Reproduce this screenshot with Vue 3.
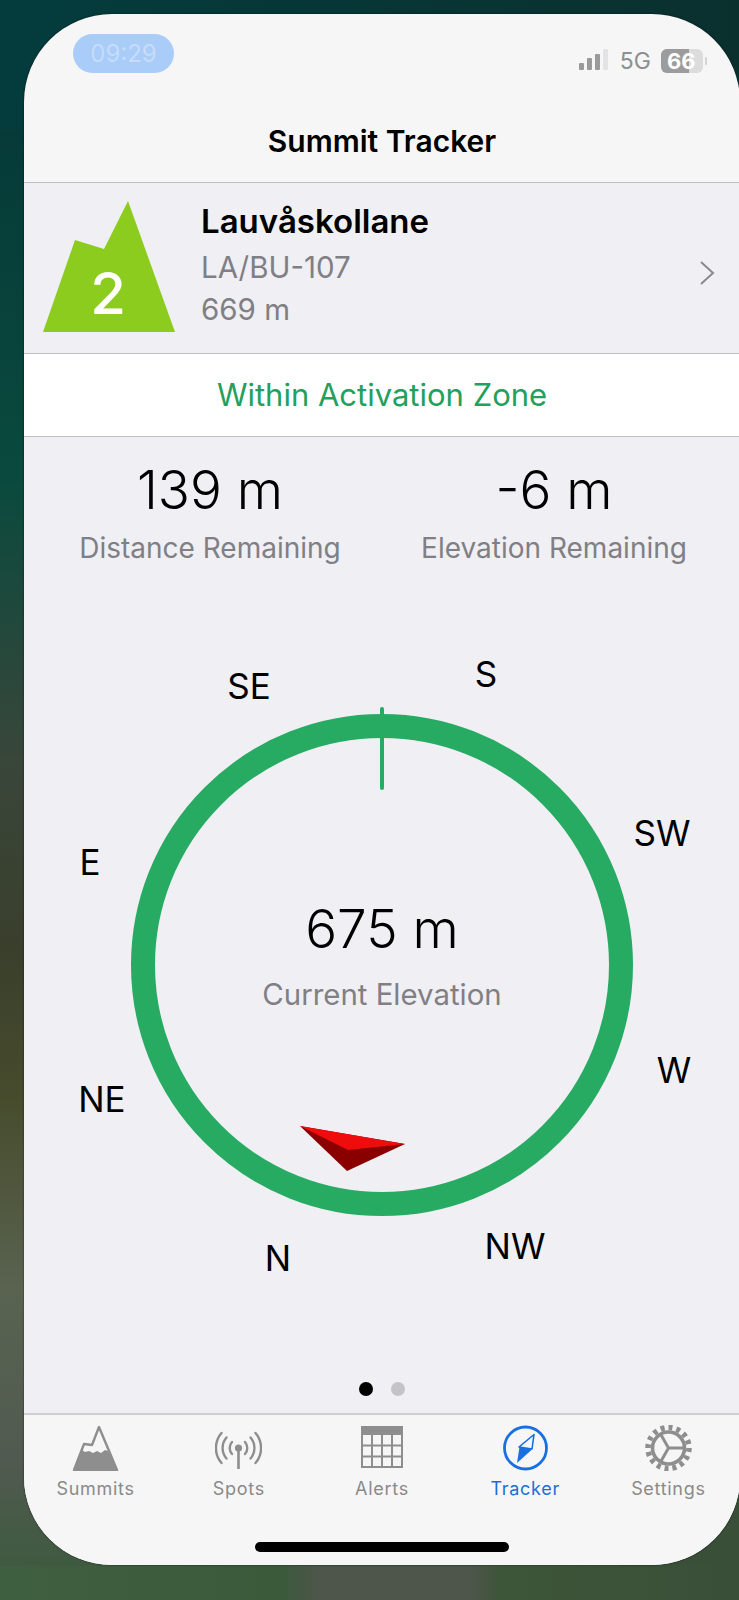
<script setup>
const RADIUS = 310

const headings = [
  { label: 'S', angle: 19.6 },
  { label: 'SW', angle: 64.6 },
  { label: 'W', angle: 109.6 },
  { label: 'NW', angle: 154.6 },
  { label: 'N', angle: 199.6 },
  { label: 'NE', angle: 244.6 },
  { label: 'E', angle: 289.6 },
  { label: 'SE', angle: 334.6 }
]

// position of a heading on the compass ring
const headingStyle = (angle) => {
  const rad = (angle * Math.PI) / 180
  return {
    left: 358 + RADIUS * Math.sin(rad) + 'px',
    top: 321 - RADIUS * Math.cos(rad) + 'px'
  }
}

const tabs = ['Summits', 'Spots', 'Alerts', 'Tracker', 'Settings']
</script>

<template>
  <div class="wallpaper">
    <div class="phone">
      <header class="top">
        <div class="status">
          <span class="clock">09:29</span>
          <div class="status-right">
            <svg class="signal" width="30" height="24" viewBox="0 0 30 24">
              <rect x="0" y="14" width="5" height="7" rx="1" fill="#9a9a9a" />
              <rect x="8" y="9" width="5" height="12" rx="1" fill="#9a9a9a" />
              <rect x="16" y="5" width="5" height="16" rx="1" fill="#9a9a9a" />
              <rect x="24" y="0" width="5" height="21" rx="1" fill="#e3e3e5" />
            </svg>
            <span class="net">5G</span>
            <div class="battery">
              <div class="battery-fill"></div>
              <span class="battery-text">66</span>
            </div>
            <span class="battery-cap"></span>
          </div>
        </div>
        <h1 class="title">Summit Tracker</h1>
      </header>

      <section class="summit">
        <svg class="peak" width="132" height="131" viewBox="0 0 132 131">
          <path d="M85 0 L132 131 L0 131 L32 39 L61 48 Z" fill="#8ccc1f" />
          <text x="65" y="113" text-anchor="middle" class="peak-num">2</text>
        </svg>
        <div class="summit-info">
          <div class="summit-name">Lauvåskollane</div>
          <div class="summit-sub">LA/BU-107</div>
          <div class="summit-sub">669 m</div>
        </div>
        <svg class="chevron" width="16" height="26" viewBox="0 0 16 26">
          <path d="M2 2 L14 13 L2 24" fill="none" stroke="#8a8a8e" stroke-width="2" />
        </svg>
      </section>

      <div class="zone">Within Activation Zone</div>

      <main class="content">
        <div class="stats">
          <div class="stat">
            <div class="stat-value">139 m</div>
            <div class="stat-label">Distance Remaining</div>
          </div>
          <div class="stat">
            <div class="stat-value">-6 m</div>
            <div class="stat-label">Elevation Remaining</div>
          </div>
        </div>

        <div class="compass">
          <svg class="ring" width="716" height="640" viewBox="0 0 716 640">
            <circle cx="358" cy="320" r="239" fill="none" stroke="#27ab62" stroke-width="24" />
            <line x1="358" y1="64" x2="358" y2="143" stroke="#27ab62" stroke-width="4" stroke-linecap="round" />
            <polygon points="276,481 381,499 323,526" fill="#8a0000" />
            <polygon points="276,481 381,499 324,505" fill="#ee0c0c" />
          </svg>
          <span
            v-for="h in headings"
            :key="h.label"
            class="heading"
            :style="headingStyle(h.angle)"
          >{{ h.label }}</span>
          <div class="elevation">
            <div class="stat-value">675 m</div>
            <div class="stat-label elevation-label">Current Elevation</div>
          </div>
        </div>

        <div class="dots">
          <span class="dot active"></span>
          <span class="dot"></span>
        </div>
      </main>

      <footer class="tabbar">
        <div class="tabs">
          <div v-for="tab in tabs" :key="tab" class="tab" :class="{ current: tab === 'Tracker' }">
            <svg v-if="tab === 'Summits'" width="47" height="46" viewBox="0 0 47 46">
              <path d="M2 45 L12 19 L20 20 L27 2 L45 45 Z" fill="none" stroke="#8e8e8e" stroke-width="2.4" stroke-linejoin="round" />
              <path d="M2 45 L10 25 L13 27 L17 26 L21 28 L25 26 L29 28 L33 25 L36 26 L45 45 Z" fill="#8e8e8e" />
            </svg>
            <svg v-else-if="tab === 'Spots'" width="47" height="46" viewBox="0 0 47 46">
              <g fill="none" stroke="#8e8e8e" stroke-width="2.4" stroke-linecap="round">
                <path d="M17 17 A9 9 0 0 0 17 29" />
                <path d="M30 17 A9 9 0 0 1 30 29" />
                <path d="M11.5 12.5 A16 16 0 0 0 11.5 33.5" />
                <path d="M35.5 12.5 A16 16 0 0 1 35.5 33.5" />
                <path d="M6.5 8 A23 23 0 0 0 6.5 38" />
                <path d="M40.5 8 A23 23 0 0 1 40.5 38" />
              </g>
              <circle cx="23.5" cy="23" r="3.6" fill="#8e8e8e" />
              <line x1="23.5" y1="23" x2="23.5" y2="44" stroke="#8e8e8e" stroke-width="2.6" />
            </svg>
            <svg v-else-if="tab === 'Alerts'" width="42" height="46" viewBox="0 0 42 46">
              <rect x="0" y="1" width="42" height="9" fill="#8e8e8e" />
              <path d="M1 1 V42 H41 V1 M1 20.5 H41 M1 31.5 H41 M11 10 V42 M21 10 V42 M31 10 V42" fill="none" stroke="#8e8e8e" stroke-width="2" />
            </svg>
            <svg v-else-if="tab === 'Tracker'" width="47" height="46" viewBox="0 0 47 46">
              <circle cx="23.5" cy="23" r="21" fill="none" stroke="#1a6fe0" stroke-width="2.8" />
              <polygon points="32,9.5 17,22 30,24" fill="none" stroke="#1a6fe0" stroke-width="1.6" stroke-linejoin="round" />
              <polygon points="15,38 17.5,22 30,24.5" fill="#1a6fe0" />
            </svg>
            <svg v-else width="47" height="46" viewBox="0 0 47 46">
              <circle cx="23.5" cy="23" r="20.5" fill="none" stroke="#8e8e8e" stroke-width="5.5" pathLength="32" stroke-dasharray="1 1" />
              <circle cx="23.5" cy="23" r="16" fill="none" stroke="#8e8e8e" stroke-width="3.6" />
              <path d="M23.5 23 H39 M23.5 23 L15.8 36.4 M23.5 23 L15.8 9.6" fill="none" stroke="#8e8e8e" stroke-width="3" />
            </svg>
            <span class="tab-label">{{ tab }}</span>
          </div>
        </div>
        <div class="home-bar"></div>
      </footer>
    </div>
  </div>
</template>

<style scoped>
.wallpaper {
  width: 739px;
  height: 1600px;
  overflow: hidden;
  padding: 14px 0 0 24px;
  box-sizing: border-box;
  font-family: Inter, "Liberation Sans", sans-serif;
  background:
    linear-gradient(to right, #3f6040 0, #3a5a3a 280px, #4e554b 320px, #4e554b 470px, #3d5539 500px, #3a4f38 739px) 0 1566px / 100% 34px no-repeat,
    linear-gradient(#3a4f38, #3a4f38) 620px 1470px / 119px 96px no-repeat,
    linear-gradient(to right, #043c3d 0, #0a302e 739px) 0 0 / 100% 130px no-repeat,
    linear-gradient(to bottom, #053a38 130px, #0a4a3e 480px, #39463a 760px, #3a3f2c 950px, #474c2d 1100px, #596350 1290px, #515a50 1460px, #3f5a40 1566px);
}

.phone {
  width: 716px;
  height: 1551px;
  display: flex;
  flex-direction: column;
  border-radius: 88px;
  overflow: hidden;
  background: #f6f6f7;
  box-shadow: 0 0 2px rgba(0, 0, 0, 0.7);
}

.top {
  height: 169px;
  flex: none;
  box-sizing: border-box;
  border-bottom: 1px solid #bdbdc3;
  padding: 20px 0 0;
}

.status {
  display: flex;
  justify-content: space-between;
  align-items: flex-start;
  padding: 0 33px 0 49px;
}

.clock {
  width: 101px;
  height: 39px;
  border-radius: 20px;
  background: #a9cdf8;
  color: #c6dcf8;
  font-size: 24px;
  line-height: 39px;
  text-align: center;
}

.status-right {
  display: flex;
  align-items: center;
  margin-top: 13px;
}

.signal {
  margin-right: 11px;
}

.net {
  font-size: 23px;
  color: #8f8f8f;
  margin-right: 10px;
}

.battery {
  position: relative;
  width: 42px;
  height: 24px;
  border-radius: 6px;
  overflow: hidden;
  background: #dcdcdc;
}

.battery-fill {
  width: 28px;
  height: 24px;
  background: #9c9c9c;
}

.battery-text {
  position: absolute;
  left: 6px;
  top: 0;
  font-size: 22px;
  line-height: 24px;
  font-weight: 700;
  color: #fff;
}

.battery-cap {
  width: 2px;
  height: 8px;
  margin-left: 2px;
  border-radius: 1px;
  background: #d5d5d5;
}

.title {
  margin: 46px 0 0;
  font-size: 30px;
  line-height: 40px;
  font-weight: 600;
  text-align: center;
  color: #000;
}

.summit {
  height: 171px;
  flex: none;
  box-sizing: border-box;
  display: flex;
  align-items: flex-start;
  padding: 18px 25px 0 19px;
  background: #efeff4;
  border-bottom: 1px solid #bdbdc3;
}

.peak {
  flex: none;
}

.peak-num {
  font-size: 58px;
  font-weight: 500;
  fill: #fff;
}

.summit-info {
  flex: 1;
  margin-left: 26px;
  margin-top: -1px;
}

.summit-name {
  font-size: 33px;
  line-height: 42px;
  font-weight: 600;
  color: #000;
}

.summit-sub {
  font-size: 29.5px;
  line-height: 42px;
  margin-top: 4px;
  color: #7f7f84;
}

.summit-sub + .summit-sub {
  margin-top: 0;
}

.chevron {
  margin-top: 59px;
}

.zone {
  height: 83px;
  flex: none;
  box-sizing: border-box;
  background: #fff;
  border-bottom: 1px solid #bdbdc3;
  color: #23a05c;
  font-size: 31px;
  line-height: 82px;
  text-align: center;
}

.content {
  flex: 1;
  display: flex;
  flex-direction: column;
  background: #efeff4;
}

.stats {
  height: 208px;
  flex: none;
  display: grid;
  grid-template-columns: 1fr 1fr;
  padding: 21px 14px 0 14px;
  box-sizing: border-box;
}

.stat,
.elevation {
  text-align: center;
}

.stat-value {
  font-size: 53px;
  line-height: 64px;
  font-weight: 300;
  color: #000;
}

.stat-label {
  font-size: 28px;
  line-height: 36px;
  margin-top: 8px;
  color: #7f7f84;
}

.compass {
  position: relative;
  height: 640px;
  flex: none;
}

.ring {
  position: absolute;
  left: 0;
  top: 0;
}

.heading {
  position: absolute;
  transform: translate(-50%, -50%);
  font-size: 35px;
  line-height: 40px;
  color: #000;
}

.elevation {
  position: absolute;
  left: 0;
  right: 0;
  top: 252px;
}

.elevation-label {
  font-size: 29.4px;
  margin-top: 16px;
}

.dots {
  display: flex;
  justify-content: center;
  gap: 18px;
  margin-top: 97px;
}

.dot {
  width: 14px;
  height: 14px;
  border-radius: 50%;
  background: #c4c4c8;
}

.dot.active {
  background: #000;
}

.tabbar {
  height: 152px;
  flex: none;
  box-sizing: border-box;
  background: #f6f6f7;
  border-top: 2px solid #cfcfd2;
  margin-top: auto;
}

.tabs {
  display: grid;
  grid-template-columns: repeat(5, 1fr);
  padding-top: 10px;
}

.tab {
  display: flex;
  flex-direction: column;
  align-items: center;
  color: #8a8a8a;
}

.tab-label {
  font-size: 18px;
  line-height: 24px;
  margin-top: 6px;
  letter-spacing: 0.7px;
}

.tab.current {
  color: #1a6fd8;
}

.home-bar {
  width: 254px;
  height: 10px;
  margin: 41px auto 0;
  border-radius: 5px;
  background: #000;
}
</style>
